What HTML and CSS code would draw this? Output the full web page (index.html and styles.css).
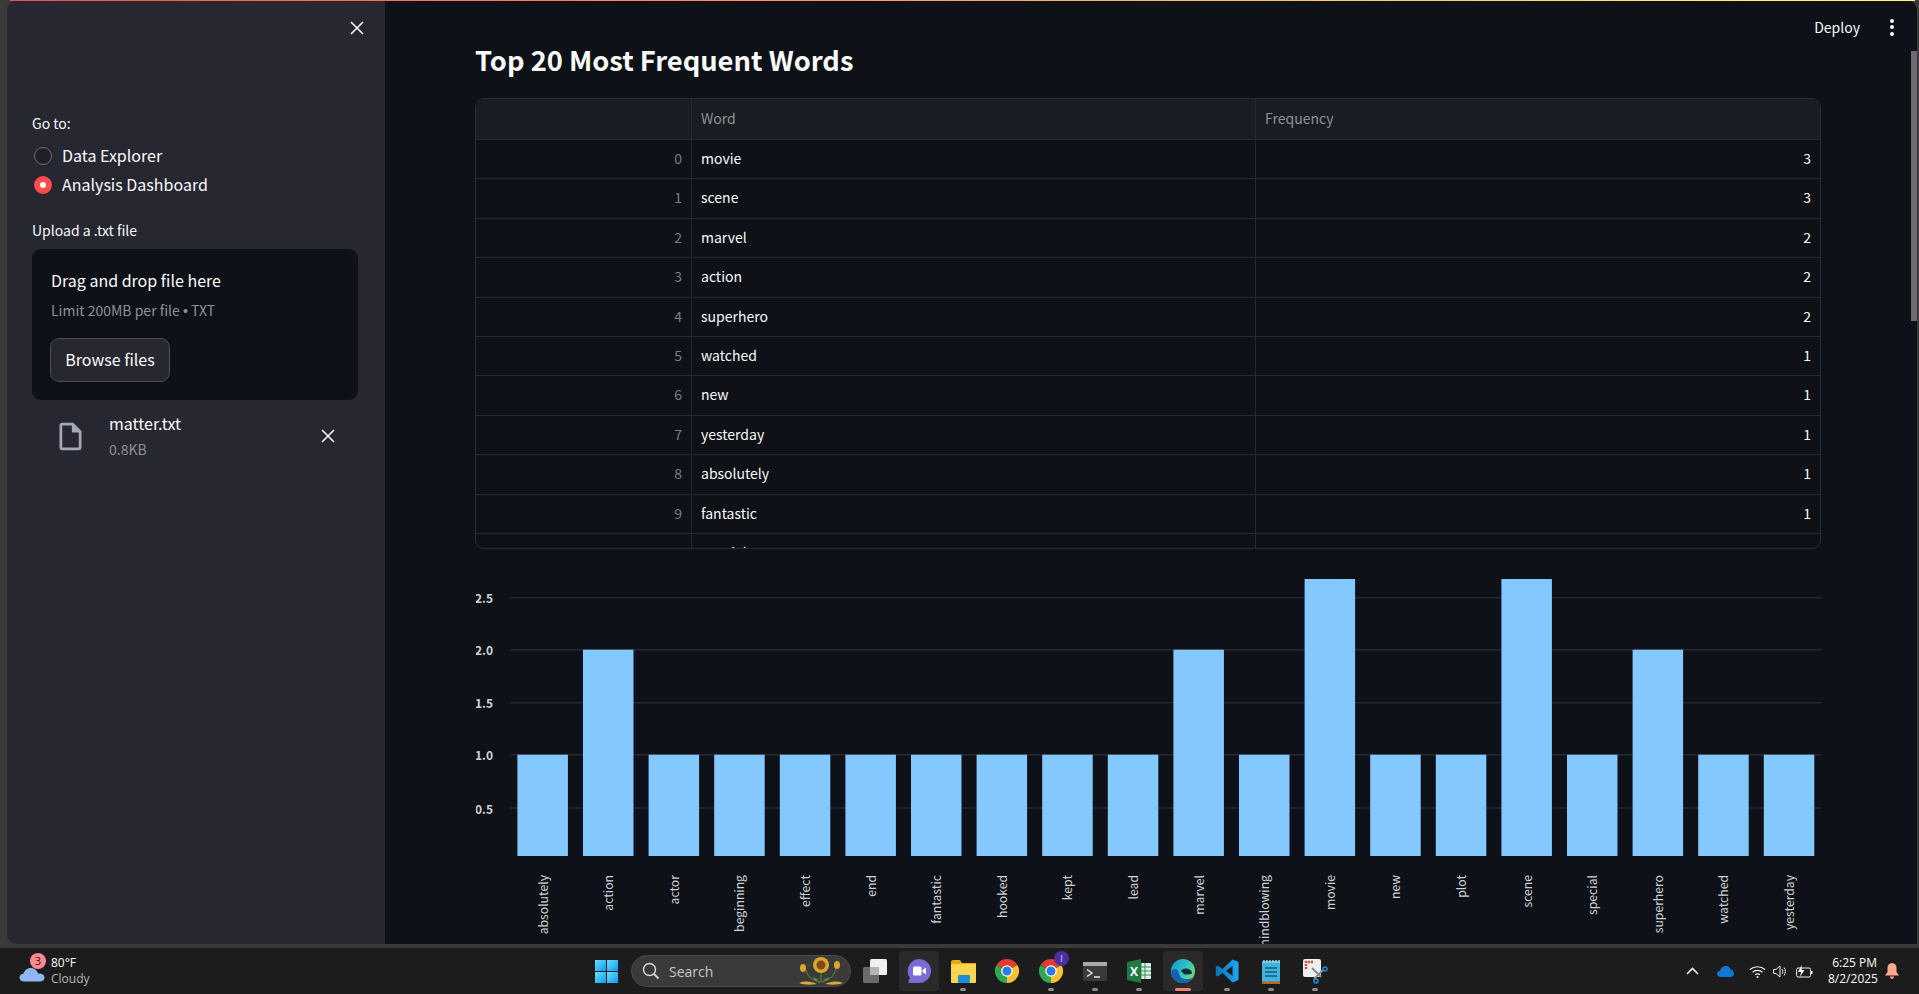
FILE: index.html
```html
<!doctype html>
<html lang="en">
<head>
    <meta charset="UTF-8">
    <title>Top 20 Most Frequent Words</title>
    <link rel="stylesheet" href="styles.css">
</head>
<body>
<svg class="defs" width="0" height="0">
    <symbol id="chrome" viewBox="0 0 24 24">
        <path fill="#e33b2e" d="M12 12L1.6 6A12 12 0 0 1 22.4 6Z"/>
        <path fill="#fbc02d" d="M12 12L22.4 6A12 12 0 0 1 12 24Z"/>
        <path fill="#2fa84f" d="M12 12L12 24A12 12 0 0 1 1.6 6Z"/>
        <circle cx="12" cy="12" r="5.8" fill="#fff"/>
        <circle cx="12" cy="12" r="4.5" fill="#2a7de1"/>
    </symbol>
    <linearGradient id="winGrad" x1="0" y1="0" x2="1" y2="1">
        <stop offset="0" stop-color="#6fdcf5"/>
        <stop offset="1" stop-color="#0a9cf5"/>
    </linearGradient>
    <linearGradient id="edgeGrad" x1="0" y1="0" x2="1" y2="0.6">
        <stop offset="0" stop-color="#1b8fd6"/>
        <stop offset="0.6" stop-color="#2cc5c0"/>
        <stop offset="1" stop-color="#6fdc6a"/>
    </linearGradient>
    <linearGradient id="codeGrad" x1="0" y1="0" x2="1" y2="0">
        <stop offset="0" stop-color="#0a6fb8"/>
        <stop offset="1" stop-color="#22a6f2"/>
    </linearGradient>
</svg>

<div class="window">
    <div class="decoration"></div>

    <aside class="sidebar">
        <div class="sidebar-head">
            <svg class="close-icon" viewBox="0 0 14 14"><path d="M1 1L13 13M13 1L1 13"/></svg>
        </div>
        <p class="field-label">Go to:</p>
        <div class="radio-row">
            <span class="radio"></span>
            <span>Data Explorer</span>
        </div>
        <div class="radio-row">
            <span class="radio radio-on"></span>
            <span>Analysis Dashboard</span>
        </div>
        <p class="field-label upload-label">Upload a .txt file</p>
        <div class="dropzone">
            <p class="drop-title">Drag and drop file here</p>
            <p class="drop-limit">Limit 200MB per file <span class="dot">•</span> TXT</p>
            <button class="browse" type="button">Browse files</button>
        </div>
        <div class="file-row">
            <svg class="file-icon" viewBox="0 0 24 24"><path d="M14 2H6c-1.1 0-2 .9-2 2v16c0 1.1.9 2 2 2h12c1.1 0 2-.9 2-2V8l-6-6zM6 20V4h7v5h5v11H6z"/></svg>
            <div class="file-text">
                <p class="file-name">matter.txt</p>
                <p class="file-size">0.8KB</p>
            </div>
            <svg class="close-icon file-close" viewBox="0 0 14 14"><path d="M1 1L13 13M13 1L1 13"/></svg>
        </div>
    </aside>

    <main class="main">
        <div class="toolbar">
            <span class="deploy">Deploy</span>
            <span class="kebab"><i></i><i></i><i></i></span>
        </div>
        <div class="scrollbar"></div>

        <h1 class="title">Top 20 Most Frequent Words</h1>

        <div class="table">
            <div class="row head"><div class="cell"></div><div class="cell">Word</div><div class="cell">Frequency</div></div>
            <div class="row"><div class="cell idx">0</div><div class="cell">movie</div><div class="cell num">3</div></div>
            <div class="row"><div class="cell idx">1</div><div class="cell">scene</div><div class="cell num">3</div></div>
            <div class="row"><div class="cell idx">2</div><div class="cell">marvel</div><div class="cell num">2</div></div>
            <div class="row"><div class="cell idx">3</div><div class="cell">action</div><div class="cell num">2</div></div>
            <div class="row"><div class="cell idx">4</div><div class="cell">superhero</div><div class="cell num">2</div></div>
            <div class="row"><div class="cell idx">5</div><div class="cell">watched</div><div class="cell num">1</div></div>
            <div class="row"><div class="cell idx">6</div><div class="cell">new</div><div class="cell num">1</div></div>
            <div class="row"><div class="cell idx">7</div><div class="cell">yesterday</div><div class="cell num">1</div></div>
            <div class="row"><div class="cell idx">8</div><div class="cell">absolutely</div><div class="cell num">1</div></div>
            <div class="row"><div class="cell idx">9</div><div class="cell">fantastic</div><div class="cell num">1</div></div>
            <div class="row"><div class="cell idx">10</div><div class="cell">special</div><div class="cell num">1</div></div>
        </div>

        <svg class="chart" width="1346" height="384" viewBox="0 0 1346 384">
            <g class="grid">
                <line x1="34.7" x2="1345" y1="37.7" y2="37.7"/>
                <line x1="34.7" x2="1345" y1="89.7" y2="89.7"/>
                <line x1="34.7" x2="1345" y1="142.7" y2="142.7"/>
                <line x1="34.7" x2="1345" y1="194.7" y2="194.7"/>
                <line x1="34.7" x2="1345" y1="248" y2="248"/>
            </g>
            <g class="y-labels">
                <text x="17" y="37.7">2.5</text>
                <text x="17" y="89.7">2.0</text>
                <text x="17" y="142.7">1.5</text>
                <text x="17" y="194.7">1.0</text>
                <text x="17" y="248">0.5</text>
            </g>
            <g class="bars">
                <rect x="41.4" y="194.7" width="50.5" height="101.3"/>
                <rect x="107" y="89.7" width="50.5" height="206.3"/>
                <rect x="172.6" y="194.7" width="50.5" height="101.3"/>
                <rect x="238.2" y="194.7" width="50.5" height="101.3"/>
                <rect x="303.8" y="194.7" width="50.5" height="101.3"/>
                <rect x="369.4" y="194.7" width="50.5" height="101.3"/>
                <rect x="435" y="194.7" width="50.5" height="101.3"/>
                <rect x="500.6" y="194.7" width="50.5" height="101.3"/>
                <rect x="566.2" y="194.7" width="50.5" height="101.3"/>
                <rect x="631.8" y="194.7" width="50.5" height="101.3"/>
                <rect x="697.4" y="89.7" width="50.5" height="206.3"/>
                <rect x="763" y="194.7" width="50.5" height="101.3"/>
                <rect x="828.6" y="19" width="50.5" height="277"/>
                <rect x="894.2" y="194.7" width="50.5" height="101.3"/>
                <rect x="959.8" y="194.7" width="50.5" height="101.3"/>
                <rect x="1025.4" y="19" width="50.5" height="277"/>
                <rect x="1091" y="194.7" width="50.5" height="101.3"/>
                <rect x="1156.6" y="89.7" width="50.5" height="206.3"/>
                <rect x="1222.2" y="194.7" width="50.5" height="101.3"/>
                <rect x="1287.8" y="194.7" width="50.5" height="101.3"/>
            </g>
            <g class="x-labels">
                <text transform="translate(66.65 315) rotate(-90)">absolutely</text>
                <text transform="translate(132.25 315) rotate(-90)">action</text>
                <text transform="translate(197.85 315) rotate(-90)">actor</text>
                <text transform="translate(263.45 315) rotate(-90)">beginning</text>
                <text transform="translate(329.05 315) rotate(-90)">effect</text>
                <text transform="translate(394.65 315) rotate(-90)">end</text>
                <text transform="translate(460.25 315) rotate(-90)">fantastic</text>
                <text transform="translate(525.85 315) rotate(-90)">hooked</text>
                <text transform="translate(591.45 315) rotate(-90)">kept</text>
                <text transform="translate(657.05 315) rotate(-90)">lead</text>
                <text transform="translate(722.65 315) rotate(-90)">marvel</text>
                <text transform="translate(788.25 315) rotate(-90)">mindblowing</text>
                <text transform="translate(853.85 315) rotate(-90)">movie</text>
                <text transform="translate(919.45 315) rotate(-90)">new</text>
                <text transform="translate(985.05 315) rotate(-90)">plot</text>
                <text transform="translate(1050.65 315) rotate(-90)">scene</text>
                <text transform="translate(1116.25 315) rotate(-90)">special</text>
                <text transform="translate(1181.85 315) rotate(-90)">superhero</text>
                <text transform="translate(1247.45 315) rotate(-90)">watched</text>
                <text transform="translate(1313.05 315) rotate(-90)">yesterday</text>
            </g>
        </svg>
    </main>
</div>

<footer class="taskbar">
    <div class="weather">
        <div class="weather-icon">
            <svg width="26" height="16" viewBox="0 0 26 16"><path fill="#8fb8f2" d="M5 15.5C2 15.5 .5 13.600 .5 11.500C.5 9.400 2.200 7.800 4.400 7.700C5.400 4.400 8.200 2 11.700 2C15.400 2 18.200 4.400 19 7.500C22.500 7.300 25.500 8.600 25.500 11.500C25.500 14 23.500 15.500 21 15.500Z"/></svg>
            <span class="weather-badge">3</span>
        </div>
        <div class="weather-text">
            <p>80°F</p>
            <p class="muted">Cloudy</p>
        </div>
    </div>

    <div class="tile">
        <svg width="23" height="23" viewBox="0 0 23 23"><g fill="url(#winGrad)"><rect width="11" height="11"/><rect x="12" width="11" height="11"/><rect y="12" width="11" height="11"/><rect x="12" y="12" width="11" height="11"/></g></svg>
    </div>

    <div class="search">
        <svg width="18" height="18" viewBox="0 0 18 18"><circle cx="7.500" cy="7.500" r="6" fill="none" stroke="#d8d8d8" stroke-width="1.500"/><path d="M12 12L16.500 16.500" stroke="#d8d8d8" stroke-width="1.800"/></svg>
        <span class="search-text">Search</span>
        <svg class="sunflower" width="46" height="30" viewBox="0 0 46 30">
            <path d="M23 14V27M8 14C9 20 14 24 22 26M38 12C37 19 32 24 24 26" fill="none" stroke="#4f7a35" stroke-width="1.300"/>
            <path d="M15 21L21 24L17 25ZM31 21L25 24L29 25Z" fill="#5d8c3a"/>
            <path d="M1 27C8 24 14 26 19 28C12 29 6 29 1 27ZM45 27C38 24 32 26 27 28C34 29 40 29 45 27Z" fill="#d9a93a"/>
            <g fill="#e0a526"><circle cx="23" cy="9" r="8"/><ellipse cx="5" cy="12" rx="3" ry="4"/><ellipse cx="39" cy="9" rx="3" ry="4"/></g>
            <circle cx="23" cy="9" r="4.500" fill="#7a4a1c"/>
        </svg>
    </div>

    <div class="tile">
        <svg width="25" height="24" viewBox="0 0 25 24"><rect x="7" y="0" width="17" height="16" rx="1.500" fill="#f0f0f0"/><rect x="0" y="8" width="16" height="16" rx="1.500" fill="#6b6b6b"/><rect x="7" y="8" width="9" height="8" fill="#b5b5b5"/></svg>
    </div>

    <div class="tile tile-active">
        <svg width="24" height="25" viewBox="0 0 24 25"><path fill="#7c6ad6" d="M12 0A12 12 0 1 1 12 24H2.500C1.500 24 1 23 1.500 22L3 19A12 12 0 0 1 12 0Z"/><rect x="6" y="7.500" width="8.500" height="9" rx="1.500" fill="#fff"/><path fill="#fff" d="M15.500 11L19 8.500V15.500L15.500 13Z"/></svg>
    </div>

    <div class="tile has-pill">
        <svg width="25" height="23" viewBox="0 0 25 23"><path fill="#e0a820" d="M0 2C0 1 .7 0 2 0H9L11 3H25V7H0Z"/><rect y="4" width="25" height="19" rx="1" fill="#fbd44e"/><rect x="7" y="15" width="12" height="8" rx="1" fill="#1d8fd8"/></svg>
    </div>

    <div class="tile">
        <svg width="24" height="24"><use href="#chrome"/></svg>
    </div>

    <div class="tile has-pill">
        <svg width="24" height="24"><use href="#chrome"/></svg>
        <span class="chrome-badge">I</span>
    </div>

    <div class="tile has-pill">
        <svg width="24" height="19" viewBox="0 0 24 19"><rect width="24" height="19" rx="1.500" fill="#3a3a3a"/><rect width="24" height="4" fill="#a8a8a8"/><path d="M4 7.500L9 11L4 14.500" fill="none" stroke="#e8e8e8" stroke-width="1.500"/><path d="M11 15H17" stroke="#e8e8e8" stroke-width="1.500"/></svg>
    </div>

    <div class="tile has-pill">
        <svg width="24" height="24" viewBox="0 0 24 24"><rect x="10" y="4" width="14" height="16" rx="1" fill="#dff2e6"/><path d="M14 4V20M18 4V20M10 8H24M10 12H24M10 16H24" stroke="#2f8f57" stroke-width="1"/><path fill="#1f7a45" d="M0 3L14 0V24L0 21Z"/><text class="excel-x" x="7" y="16.500">X</text></svg>
    </div>

    <div class="tile tile-active has-pill pill-red">
        <svg width="24" height="24" viewBox="0 0 24 24"><circle cx="12" cy="12" r="12" fill="url(#edgeGrad)"/><path fill="#14284a" d="M10 13C10 10.500 13 9 16 9.500C19 10 21 12 21 14.500C18 16 13 16 12 14C11.500 13 10 12.500 10 13Z"/><path fill="#175fb8" d="M.2 12.500C.5 19 6 24 12 24C16 24 20 22 22 18.500C18 21 9 21.500 8 14.500C7.500 10 3 8 .2 12.500Z"/></svg>
    </div>

    <div class="tile has-pill">
        <svg width="24" height="24" viewBox="0 0 24 24"><path fill-rule="evenodd" fill="url(#codeGrad)" d="M17.500 .5L7.500 10L2.800 6.400L.8 7.500V16.500L2.800 17.600L7.500 14L17.500 23.500L23.500 21V3ZM17.500 7V17L11 12Z"/></svg>
    </div>

    <div class="tile has-pill">
        <svg width="20" height="25" viewBox="0 0 20 25"><rect x="1" y="2" width="18" height="23" rx="1" fill="#3fb3dc"/><rect x="1" y="22.500" width="18" height="2.500" fill="#b8632a"/><path d="M3 1V4M6 1V4M9 1V4M12 1V4M15 1V4M18 1V4" stroke="#bfe6f5" stroke-width="1.300"/><path d="M4 9H16M4 13H16M4 17H16" stroke="#135f80" stroke-width="1.500"/></svg>
    </div>

    <div class="tile has-pill">
        <svg width="25" height="25" viewBox="0 0 25 25"><rect x="0" y="0" width="18" height="18" rx="2" fill="#eeeeee"/><path d="M3 10V3H10" fill="none" stroke="#d04a2f" stroke-width="2.500" stroke-dasharray="2 1"/><path d="M9 9L18 18M11 20L20 11" stroke="#8a8a8a" stroke-width="2"/><circle cx="22" cy="10" r="2" fill="none" stroke="#1d8fd8" stroke-width="1.500"/><circle cx="13" cy="22" r="2" fill="none" stroke="#1d8fd8" stroke-width="1.500"/></svg>
    </div>

    <div class="tray">
        <svg class="tray-chevron" width="13" height="8" viewBox="0 0 13 8"><path d="M1 7L6.500 1.500L12 7" fill="none" stroke="#f0f0f0" stroke-width="1.600"/></svg>
        <svg class="tray-cloud" width="17" height="11" viewBox="0 0 17 11"><path fill="#0f78d4" d="M3.500 11C1.500 11 0 9.600 0 7.800C0 6 1.400 4.800 3 4.700C3.800 2 6.200 0 8.800 0C11.200 0 13 1.400 13.800 3.400C15.800 3.800 17 5.500 17 7.500C17 9.500 15.500 11 13.500 11Z"/></svg>
        <svg class="tray-wifi" width="17" height="13" viewBox="0 0 17 13"><path d="M1 4.500C5.200 .8 11.800 .8 16 4.500M3.500 7.200C6.200 4.800 10.800 4.800 13.500 7.200M6 9.800C7.400 8.700 9.600 8.700 11 9.800" fill="none" stroke="#f0f0f0" stroke-width="1.200"/><circle cx="8.500" cy="12" r="1" fill="#f0f0f0"/></svg>
        <svg class="tray-sound" width="15" height="13" viewBox="0 0 15 13"><path d="M.6 4.500H3L7 1V12L3 8.500H.6Z" fill="none" stroke="#f0f0f0" stroke-width="1"/><path d="M9 4C10 5.500 10 7.500 9 9M11 2.500C12.800 5 12.800 8 11 10.500" fill="none" stroke="#f0f0f0" stroke-width="1"/></svg>
        <svg class="tray-battery" width="17" height="13" viewBox="0 0 17 13"><rect x=".6" y="3" width="14" height="9" rx="1.500" fill="none" stroke="#f0f0f0" stroke-width="1"/><rect x="15" y="6" width="1.500" height="3" fill="#f0f0f0"/><path d="M5.500 0L2 7H5L4 12L8.500 5H5.800Z" fill="#f0f0f0"/></svg>
        <div class="clock">
            <p>6:25 PM</p>
            <p>8/2/2025</p>
        </div>
        <svg class="tray-bell" width="14" height="16" viewBox="0 0 14 16"><path fill="#ffa98c" d="M7 0C10 0 11.500 2.200 11.500 5V9L14 12.500H0L2.500 9V5C2.500 2.200 4 0 7 0Z"/><path fill="#ffa98c" d="M5 13.500H9C9 15 8 16 7 16C6 16 5 15 5 13.500Z"/></svg>
    </div>
</footer>
</body>
</html>
```

FILE: styles.css
```css
* {
    box-sizing: border-box;
}
html, body {
    height: 994px;
    margin: 0;
    overflow: hidden;
}
body {
    font-family: "Noto Sans CJK SC", "Noto Sans", sans-serif;
    background-color: #1c1c1c;
    color: #fafafa;
}
p {
    margin: 0;
}
.defs {
    position: absolute;
}

/* app window */
.window {
    position: relative;
    display: flex;
    height: 948px;
    padding: 0 2px 4px 7px;
    background-color: #3a3a3a;
}
.decoration {
    position: absolute;
    z-index: 1;
    top: 0;
    left: 10px;
    right: 4px;
    height: 1px;
    background: linear-gradient(90deg, #ff4b4b, #fffd80);
}

/* sidebar */
.sidebar {
    width: 378px;
    flex-shrink: 0;
    padding: 0 27px 0 25px;
    background-color: #262730;
    border-radius: 10px 0 0 10px;
}
.sidebar-head {
    display: flex;
    justify-content: flex-end;
    height: 112px;
    padding-top: 21px;
    margin-right: -6px;
}
.close-icon {
    width: 14px;
    height: 14px;
}
.close-icon path {
    fill: none;
    stroke: #fafafa;
    stroke-width: 1.6;
}
.field-label {
    font-size: 14px;
    line-height: 22px;
    padding-bottom: 2px;
}
.radio-row {
    display: flex;
    align-items: center;
    gap: 10px;
    height: 29px;
    font-size: 16px;
    margin-left: 2px;
}
.field-label + .radio-row {
    margin-top: 4px;
}
.radio {
    width: 18px;
    height: 18px;
    margin-top: 2px;
    border: 1px solid #6b6d76;
    border-radius: 50%;
    background-color: #1f2029;
}
.radio-on {
    border: 6px solid #ff4b4b;
    background-color: #fff;
}
.upload-label {
    margin-top: 20px;
    margin-bottom: 7px;
    line-height: 24px;
    padding-bottom: 0;
}
.dropzone {
    height: 151px;
    padding: 18px 19px;
    background-color: #0e1117;
    border-radius: 9px;
}
.drop-title {
    font-size: 16px;
    line-height: 26px;
    padding-bottom: 2px;
}
.drop-limit {
    font-size: 14px;
    line-height: 24px;
    margin-top: 3px;
    color: #8e9096;
}
.dot {
    font-family: "Liberation Sans", sans-serif;
}
.browse {
    display: block;
    width: 120px;
    height: 44px;
    margin-top: 15px;
    margin-left: -1px;
    padding: 0 0 2px;
    font-family: inherit;
    font-size: 16px;
    color: #fafafa;
    background-color: #262730;
    border: 1px solid #4b4d57;
    border-radius: 9px;
}
.file-row {
    display: flex;
    align-items: center;
    height: 72px;
    padding-left: 22px;
}
.file-icon {
    width: 33px;
    height: 33px;
    flex-shrink: 0;
    fill: #a3a8b8;
}
.file-text {
    margin-left: 22px;
    margin-top: -2px;
    flex-grow: 1;
}
.file-name {
    font-size: 16px;
    line-height: 26px;
}
.file-size {
    font-size: 14px;
    line-height: 24px;
    margin-top: 1px;
    color: #8e9096;
}
.file-close {
    margin-right: 23px;
}

/* main area */
.main {
    position: relative;
    flex-grow: 1;
    padding: 0 96px 0 90px;
    overflow: hidden;
    background-color: #0e1117;
    border-radius: 0 10px 0 0;
}
.toolbar {
    position: absolute;
    top: 15px;
    right: 23px;
    display: flex;
    align-items: center;
    gap: 30px;
}
.deploy {
    font-size: 14px;
    line-height: 24px;
}
.kebab {
    display: flex;
    flex-direction: column;
    gap: 2.5px;
}
.kebab i {
    width: 4px;
    height: 4px;
    border-radius: 50%;
    background-color: #fafafa;
}
.scrollbar {
    position: absolute;
    top: 51px;
    right: 0;
    width: 6px;
    height: 270px;
    background-color: #6a6b70;
}
.title {
    margin: 37px 0 17px;
    font-size: 27.3px;
    font-weight: 700;
    line-height: 44px;
}

/* dataframe */
.table {
    height: 451px;
    overflow: hidden;
    border: 1px solid #2a2c33;
    border-radius: 9px;
    font-size: 14px;
}
.row {
    display: grid;
    grid-template-columns: 216px 564px 1fr;
    height: 39.4px;
    border-bottom: 1px solid #272930;
}
.cell {
    padding: 0 9px;
    line-height: 36px;
    border-right: 1px solid #272930;
}
.cell:last-child {
    border-right: none;
}
.head {
    height: 41px;
    background-color: #1a1c24;
    color: #8e9096;
}
.head .cell {
    line-height: 39px;
}
.idx {
    text-align: right;
    color: #7c7e86;
}
.num {
    text-align: right;
}

/* bar chart */
.chart {
    display: block;
    margin-top: 11px;
    margin-left: 1px;
}
.grid line {
    stroke: #262730;
    stroke-width: 1.4;
}
.bars rect {
    fill: #83c9ff;
}
.y-labels text {
    fill: #d0d2d8;
    font-size: 12px;
    font-weight: 600;
    text-anchor: end;
    dominant-baseline: central;
}
.x-labels text {
    fill: #cfd1d6;
    font-size: 12.2px;
    text-anchor: end;
    dominant-baseline: central;
}

/* windows taskbar */
.taskbar {
    display: flex;
    align-items: center;
    height: 46px;
    font-family: "Open Sans", sans-serif;
    background-color: #1c1c1c;
}
.weather {
    display: flex;
    align-items: center;
    width: 584px;
    height: 46px;
    padding-left: 19px;
    font-size: 12px;
    line-height: 16px;
}
.weather-icon {
    position: relative;
    width: 26px;
    height: 16px;
    margin-top: 6px;
}
.weather-icon svg {
    display: block;
}
.weather-badge {
    position: absolute;
    top: -13px;
    left: 11px;
    width: 16px;
    height: 16px;
    font-size: 11px;
    line-height: 16px;
    text-align: center;
    color: #2a1416;
    background-color: #ff8a93;
    border-radius: 50%;
}
.weather-text {
    margin-left: 6px;
}
.muted {
    color: #b4b4b4;
}
.tile {
    position: relative;
    display: flex;
    align-items: center;
    justify-content: center;
    flex-shrink: 0;
    width: 44px;
    height: 40px;
}
.tile-active::before {
    content: "";
    position: absolute;
    top: 0;
    bottom: 0;
    left: 2px;
    right: 2px;
    background-color: #2a2a2a;
    border-radius: 4px;
}
.tile svg {
    position: relative;
}
.has-pill::after {
    content: "";
    position: absolute;
    bottom: 0;
    left: 19px;
    width: 6px;
    height: 3px;
    border-radius: 2px;
    background-color: #8c8c8c;
}
.pill-red::after {
    left: 14px;
    width: 16px;
    background-color: #f08070;
}
.chrome-badge {
    position: absolute;
    top: 0;
    left: 25px;
    width: 15px;
    height: 15px;
    font-size: 9px;
    line-height: 15px;
    text-align: center;
    color: #d8cff5;
    background-color: #4b2fa0;
    border-radius: 50%;
}
.excel-x {
    fill: #fff;
    font-size: 12px;
    font-weight: 700;
    text-anchor: middle;
}
.search {
    display: flex;
    align-items: center;
    flex-shrink: 0;
    width: 220px;
    height: 32px;
    margin: 0 2px 0 3px;
    padding: 0 6px 0 10px;
    background-color: #3a3a3a;
    border: 1px solid #4a4a4a;
    border-radius: 16px;
}
.search-text {
    margin-left: 9px;
    flex-grow: 1;
    font-size: 14px;
    color: #c8c8c8;
}
.tray {
    display: flex;
    align-items: center;
    margin-left: auto;
    padding-right: 20px;
}
.tray-cloud {
    margin-left: 18px;
}
.tray-wifi {
    margin-left: 15px;
}
.tray-sound {
    margin-left: 7px;
}
.tray-battery {
    margin-left: 8px;
}
.clock {
    margin-left: 15px;
    width: 49px;
    font-size: 12px;
    line-height: 16px;
    text-align: right;
    white-space: nowrap;
}
.tray-bell {
    margin-left: 8px;
}
```
